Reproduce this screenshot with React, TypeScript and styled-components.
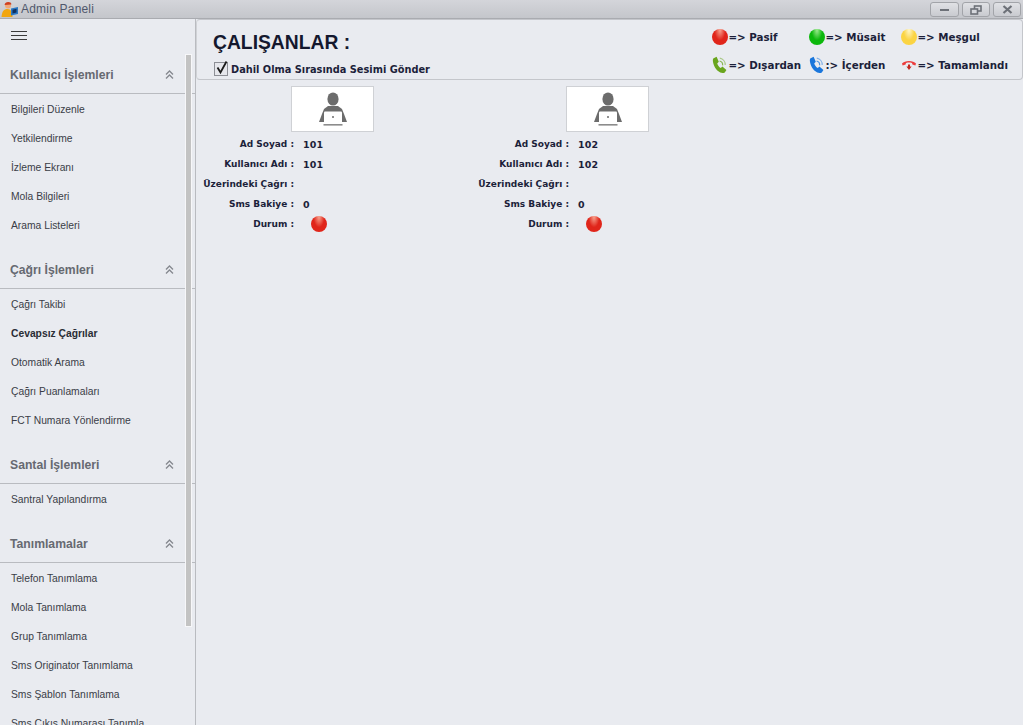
import styled, { createGlobalStyle } from 'styled-components'

const GlobalStyle = createGlobalStyle`
    html, body {
        margin: 0;
        padding: 0;
        height: 100%;
        overflow: hidden;
        background: #e9ebf0;
        font-family: "DejaVu Sans", "Noto Sans", sans-serif;
    }
    #root {
        height: 100%;
    }
`

const menu = [
    {
        title: 'Kullanıcı İşlemleri',
        items: ['Bilgileri Düzenle', 'Yetkilendirme', 'İzleme Ekranı', 'Mola Bilgileri', 'Arama Listeleri'],
    },
    {
        title: 'Çağrı İşlemleri',
        items: ['Çağrı Takibi', 'Cevapsız Çağrılar', 'Otomatik Arama', 'Çağrı Puanlamaları', 'FCT Numara Yönlendirme'],
    },
    {
        title: 'Santal İşlemleri',
        items: ['Santral Yapılandırma'],
    },
    {
        title: 'Tanımlamalar',
        items: [
            'Telefon Tanımlama',
            'Mola Tanımlama',
            'Grup Tanımlama',
            'Sms Originator Tanımlama',
            'Sms Şablon Tanımlama',
            'Sms Çıkış Numarası Tanımla',
        ],
    },
]

const employees = [
    { name: '101', user: '101', balance: '0' },
    { name: '102', user: '102', balance: '0' },
]

function PhoneIcon({ color }: { color: string }) {
    return (
        <svg width="16" height="18" viewBox="0 0 16 18">
            <path
                d="M1.2 2.6 L4.6 .8 L6.8 5.8 L5.2 7.4 C5.8 9.2 7 10.8 8.8 12 L10.4 10.6 L14.4 14 L12.8 16.4 C9.4 18.6 4.6 14.8 2.6 10.8 C1 7.4 .4 4.6 1.2 2.6 Z"
                fill={color}
            />
            <g fill="none" stroke={color} strokeWidth="1.2">
                <path d="M7.6 5 A4 4 0 0 1 10.6 9.4" opacity="0.75" />
                <path d="M7.8 2.2 A6.6 6.6 0 0 1 13.2 9" opacity="0.5" />
            </g>
        </svg>
    )
}

function HangupIcon() {
    return (
        <svg width="16" height="12" viewBox="0 0 16 12">
            <path
                d="M1 4.6 C3.6 1 12.4 1 15 4.6 L14.4 6.4 L11.4 5.6 L11 4 C9 3.4 7 3.4 5 4 L4.6 5.6 L1.6 6.4 Z"
                fill="#ec3c3c"
            />
            <path d="M7 5.4 H9 V7.6 H10.6 L8 11 L5.4 7.6 H7 Z" fill="#c4261e" />
        </svg>
    )
}

function AppIcon() {
    return (
        <svg width="18" height="17" viewBox="0 0 18 17">
            <circle cx="7" cy="4.6" r="3" fill="#f0a878" />
            <path d="M3.6 4 C3.6 .2 10.4 .2 10.4 3.4 Z" fill="#cf3f1e" />
            <path d="M.5 16 C1 10 3 8 6.5 8 C10 8 11.5 11 11.5 16 Z" fill="#f2a60f" />
            <path d="M10 7.5 L17 6 V13 L10 14.5 Z" fill="#2a78c4" />
            <path d="M11.5 8.7 L15.5 7.8 V11.6 L11.5 12.6 Z" fill="#10305e" />
        </svg>
    )
}

function PersonIcon() {
    return (
        <svg width="30" height="34" viewBox="0 0 30 34">
            <ellipse cx="15" cy="7" rx="5.6" ry="6.6" fill="#6c6c6c" />
            <path d="M10 14 H20 L24 17 L26 22 L29 30 H1 L4 22 L6 17 Z" fill="#6c6c6c" />
            <rect x="6" y="19.5" width="18" height="11.5" rx="1" fill="#fff" />
            <circle cx="15" cy="25" r="1" fill="#6c6c6c" />
            <rect x="5.5" y="32" width="19" height="1.6" fill="#8c8c8c" />
        </svg>
    )
}

function App() {
    return (
        <Page>
            <GlobalStyle />
            <TitleBar>
                <AppIcon />
                <AppTitle>Admin Paneli</AppTitle>
                <WindowButtons>
                    <WindowButton $wide>
                        <svg width="11" height="4"><rect x="1" y="1" width="9" height="2" fill="#6d7178" /></svg>
                    </WindowButton>
                    <WindowButton>
                        <svg width="12" height="10" fill="none" stroke="#6d7178" strokeWidth="1.6">
                            <rect x="4.5" y="1" width="6.5" height="5" />
                            <rect x="1" y="4" width="6.5" height="5" fill="#d6d8dd" />
                        </svg>
                    </WindowButton>
                    <WindowButton>
                        <svg width="11" height="9" stroke="#6d7178" strokeWidth="2.2">
                            <path d="M1.5 1 L9.5 8 M9.5 1 L1.5 8" />
                        </svg>
                    </WindowButton>
                </WindowButtons>
            </TitleBar>
            <Body>
                <Sidebar>
                    <Hamburger>
                        <span />
                        <span />
                        <span />
                    </Hamburger>
                    {menu.map(section => (
                        <Section key={section.title}>
                            <SectionHeader>
                                {section.title}
                                <svg width="9" height="10" viewBox="0 0 9 10" fill="none" stroke="#85888f" strokeWidth="1.3">
                                    <path d="M1 4.5 L4.5 1 L8 4.5" />
                                    <path d="M1 8.5 L4.5 5 L8 8.5" />
                                </svg>
                            </SectionHeader>
                            {section.items.map(item => (
                                <MenuItem key={item} $active={item === 'Cevapsız Çağrılar'}>
                                    {item}
                                </MenuItem>
                            ))}
                        </Section>
                    ))}
                    <ScrollThumb />
                </Sidebar>
                <Main>
                    <Panel>
                        <PanelTitle>
                            <Heading>ÇALIŞANLAR :</Heading>
                            <CheckRow>
                                <CheckBox>
                                    <svg width="16" height="16" viewBox="0 0 16 16" fill="none" stroke="#1b1b1b" strokeWidth="1.8">
                                        <path d="M3.5 7.5 L6.5 12.5 L12.5 1.5" />
                                    </svg>
                                </CheckBox>
                                Dahil Olma Sırasında Sesimi Gönder
                            </CheckRow>
                        </PanelTitle>
                        <Legend>
                            <LegendItem>
                                <Ball $color="#e0251a" $shine="#f7a08c" />=&gt; Pasif
                            </LegendItem>
                            <LegendItem>
                                <Ball $color="#0cb80c" $shine="#9aea8c" />=&gt; Müsait
                            </LegendItem>
                            <LegendItem>
                                <Ball $color="#fbd443" $shine="#fff6c8" />=&gt; Meşgul
                            </LegendItem>
                            <LegendItem>
                                <IconSlot><PhoneIcon color="#6aa51e" /></IconSlot>=&gt; Dışardan
                            </LegendItem>
                            <LegendItem>
                                <IconSlot><PhoneIcon color="#1a76dc" /></IconSlot>:&gt; İçerden
                            </LegendItem>
                            <LegendItem>
                                <IconSlot><HangupIcon /></IconSlot>=&gt; Tamamlandı
                            </LegendItem>
                        </Legend>
                    </Panel>
                    <Cards>
                        {employees.map(emp => (
                            <Card key={emp.name}>
                                <Avatar>
                                    <PersonIcon />
                                </Avatar>
                                <InfoRow>
                                    <Label>Ad Soyad :</Label>
                                    <Value>{emp.name}</Value>
                                </InfoRow>
                                <InfoRow>
                                    <Label>Kullanıcı Adı :</Label>
                                    <Value>{emp.user}</Value>
                                </InfoRow>
                                <InfoRow>
                                    <Label>Üzerindeki Çağrı :</Label>
                                </InfoRow>
                                <InfoRow>
                                    <Label>Sms Bakiye :</Label>
                                    <Value>{emp.balance}</Value>
                                </InfoRow>
                                <InfoRow>
                                    <Label>Durum :</Label>
                                    <StatusBall $color="#e0251a" $shine="#f7a08c" />
                                </InfoRow>
                            </Card>
                        ))}
                    </Cards>
                </Main>
            </Body>
        </Page>
    )
}

const Page = styled.div`
    display: flex;
    flex-direction: column;
    height: 725px;
    overflow: hidden;
    background: #e9ebf0;
`

const TitleBar = styled.div`
    display: flex;
    align-items: center;
    gap: 2px;
    flex: 0 0 19px;
    box-sizing: border-box;
    height: 19px;
    padding-left: 1px;
    background: linear-gradient(#d4d5da, #c4c6cb);
    border-bottom: 1px solid #a9abb0;
`

const AppTitle = styled.span`
    font-family: "Liberation Sans", sans-serif;
    font-size: 12px;
    color: #50586c;
    letter-spacing: 0.2px;
`

const WindowButtons = styled.div`
    display: flex;
    gap: 3px;
    margin-left: auto;
    margin-right: 2px;
    align-self: flex-start;
    padding-top: 2px;
`

const WindowButton = styled.div<{ $wide?: boolean }>`
    display: flex;
    align-items: center;
    justify-content: center;
    box-sizing: border-box;
    width: ${props => (props.$wide ? '29px' : '28px')};
    height: 15px;
    border: 1px solid #a2a4a9;
    border-radius: 3px;
    background: linear-gradient(#e0e1e5, #c9cbd0);
`

const Body = styled.div`
    display: flex;
    flex: 1;
    min-height: 0;
`

const Sidebar = styled.nav`
    position: relative;
    flex: 0 0 196px;
    box-sizing: border-box;
    border-right: 1px solid #b9bbc0;
    overflow: hidden;
`

const Hamburger = styled.div`
    display: flex;
    flex-direction: column;
    gap: 3px;
    width: 16px;
    height: 24px;
    padding: 12px 0 0 11px;

    span {
        display: block;
        height: 1px;
        background: #3b3b3b;
    }
`

const Section = styled.section`
    margin-bottom: 11px;
`

const SectionHeader = styled.div`
    display: flex;
    align-items: center;
    justify-content: space-between;
    box-sizing: border-box;
    height: 39px;
    padding: 1px 21px 0 10px;
    border-bottom: 1px solid #b9bbc0;
    font-family: "Liberation Sans", sans-serif;
    font-size: 12.2px;
    font-weight: 700;
    color: #666971;
`

const MenuItem = styled.div<{ $active?: boolean }>`
    height: 28px;
    padding: 1px 0 0 11px;
    line-height: 29px;
    font-family: "Liberation Sans", sans-serif;
    font-size: 10.3px;
    white-space: nowrap;
    color: ${props => (props.$active ? '#2a2d35' : '#3a3d47')};
    font-weight: ${props => (props.$active ? 700 : 400)};
`

const ScrollThumb = styled.div`
    position: absolute;
    top: 35px;
    left: 185px;
    box-sizing: border-box;
    width: 7px;
    height: 573px;
    background: #c3c3c3;
    border: 1px solid #f7f7f9;
`

const Main = styled.main`
    flex: 1;
    min-width: 0;
`

const Panel = styled.header`
    display: flex;
    justify-content: space-between;
    box-sizing: border-box;
    height: 61px;
    padding: 0 14px 0 16px;
    border: 1px solid #c4c6cb;
    border-left-color: #d0d2d6;
    border-radius: 4px;
`

const PanelTitle = styled.div`
    padding-top: 11px;
`

const Heading = styled.h1`
    margin: 0;
    font-family: "Liberation Sans", sans-serif;
    font-size: 19.3px;
    line-height: 24px;
    font-weight: 700;
    color: #14182e;
`

const CheckRow = styled.label`
    display: flex;
    align-items: center;
    gap: 3px;
    margin: 7px 0 0 1px;
    font-size: 9.8px;
    font-weight: 700;
    color: #1c1f3a;
    white-space: nowrap;
`

const CheckBox = styled.span`
    display: block;
    box-sizing: border-box;
    width: 14px;
    height: 14px;
    border: 1px solid #8d8f96;
    background: #e6e7ec;
    line-height: 0;

    svg {
        margin: -3px 0 0 -1px;
    }
`

const Legend = styled.div`
    display: grid;
    grid-template-columns: 97px 92px auto;
    grid-auto-rows: 28px;
    align-items: center;
    padding-top: 3px;
`

const LegendItem = styled.div`
    display: flex;
    align-items: center;
    font-size: 10.3px;
    font-weight: 700;
    color: #1c1f3a;
    white-space: pre;
`

const Ball = styled.span<{ $color: string; $shine: string }>`
    display: block;
    flex: 0 0 16px;
    width: 16px;
    height: 16px;
    border-radius: 50%;
    background: radial-gradient(ellipse at 50% 8%, ${props => props.$shine} 0, ${props => props.$color} 48%);
`

const StatusBall = styled(Ball)`
    margin-left: 8px;
`

const IconSlot = styled.span`
    display: flex;
    align-items: center;
    justify-content: center;
    flex: 0 0 16px;
    width: 16px;
`

const Cards = styled.div`
    display: flex;
    padding-top: 6px;
`

const Card = styled.article`
    flex: 0 0 275px;
`

const Avatar = styled.div`
    display: flex;
    align-items: center;
    justify-content: center;
    box-sizing: border-box;
    width: 83px;
    height: 46px;
    margin: 0 0 2px 95px;
    background: #fff;
    border: 1px solid #cfd1d5;
`

const InfoRow = styled.div`
    display: flex;
    align-items: center;
    gap: 9px;
    height: 20px;
    font-size: 9px;
    font-weight: 700;
    color: #1c1f3a;
`

const Label = styled.span`
    flex: 0 0 98px;
    text-align: right;
    white-space: nowrap;
`

const Value = styled.span`
    font-size: 9.5px;
    letter-spacing: 0.2px;
`

export default App
